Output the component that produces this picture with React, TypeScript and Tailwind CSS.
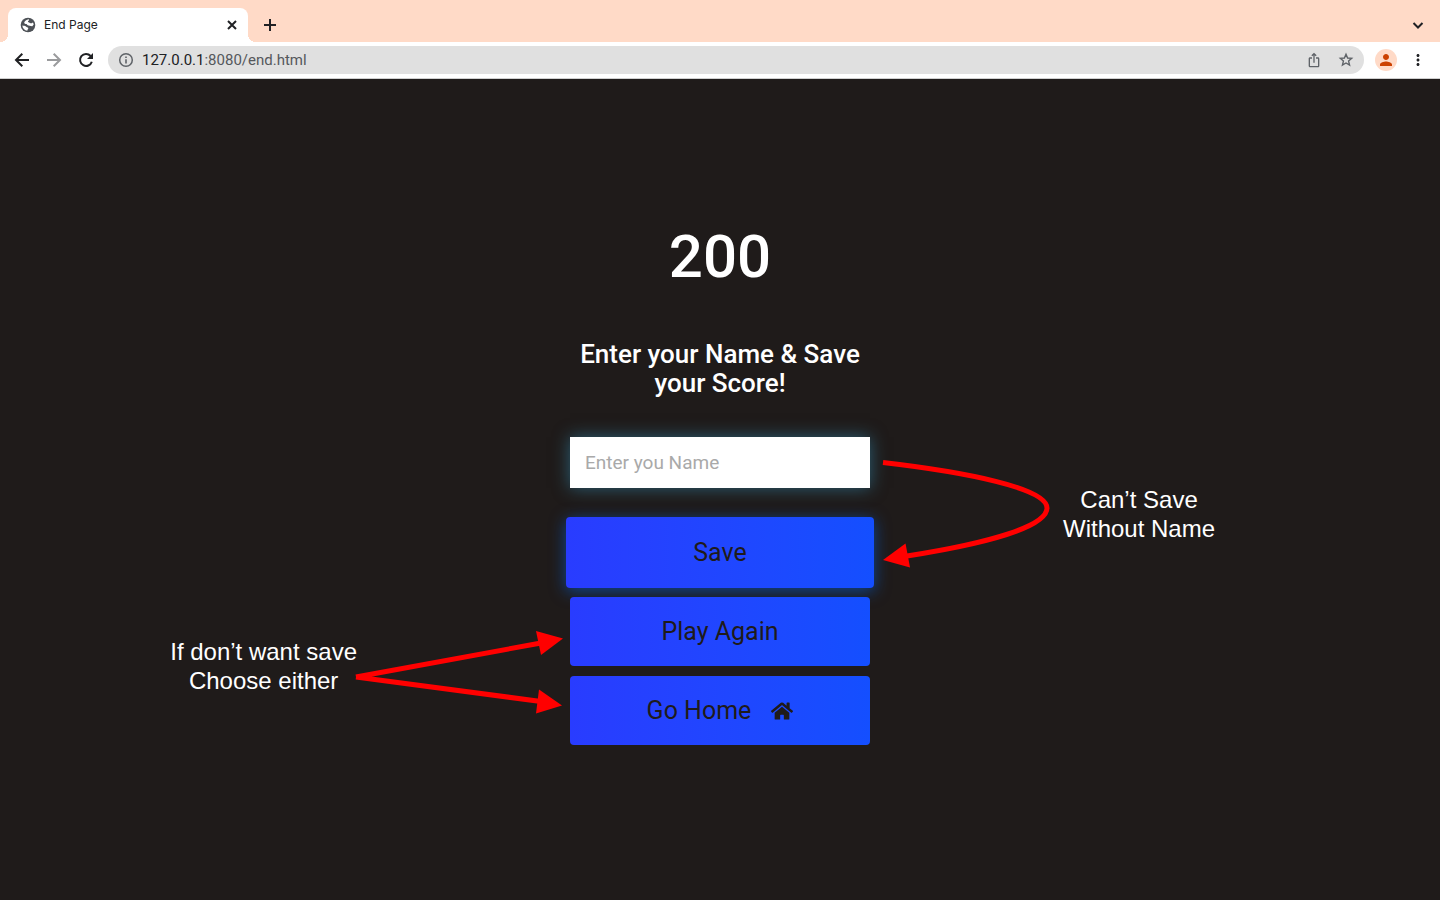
import React from "react";
import { MdIosShare, MdMoreVert, MdPerson } from "react-icons/md";
import { FaHome } from "react-icons/fa";

function GlobeIcon() {
  return (
    <svg viewBox="0 0 16 16" className="size-4" aria-hidden="true">
      <circle cx="8" cy="8" r="7.3" fill="#4d5156" />
      <path
        d="M8.800 2.200C6.400 2.600 4.600 3.800 4.200 5.600C4.300 6.700 5.300 7 6.600 7.100C7.200 8.300 8.200 8.600 9.600 8.700C10.600 8.900 11.200 9.400 12.300 9.300L13.700 7.600C13.600 6.800 13.300 6 12.900 5.400C12 6 11.400 6.200 10.500 6.200C9.800 5.700 9.400 5.400 8.500 5.200C7.700 4.800 7.700 4.200 8.500 3.800C9.100 3.400 9.200 2.800 8.800 2.200Z"
        fill="#fff"
      />
      <path
        d="M2.300 8.400C3.500 8.600 5 8.600 6 9.400C6.600 10.300 7.600 10.200 8.300 10.900C8.500 11.700 7.400 12.200 7.300 13.700C4.600 13.400 2.500 11.300 2.300 8.400Z"
        fill="#fff"
      />
    </svg>
  );
}

/* Stroked glyph on a 20-unit grid, shared by the tab strip and the toolbar. */
function LineIcon({ d, className = "size-5" }: { d: string; className?: string }) {
  return (
    <svg viewBox="0 0 20 20" className={className} fill="none" stroke="currentColor" strokeWidth="2" aria-hidden="true">
      <path d={d} />
    </svg>
  );
}

function TabStrip() {
  return (
    <div className="flex h-[42px] items-end justify-between bg-[#ffdac7] pl-2">
      <div className="flex items-end">
        <div className="relative flex h-[34px] w-60 items-center rounded-t-lg bg-white pr-[6px] pl-3">
          <span className="absolute bottom-0 -left-2 size-2 bg-[radial-gradient(circle_at_0_0,#ffdac7_8px,#fff_8px)]" />
          <span className="absolute -right-2 bottom-0 size-2 bg-[radial-gradient(circle_at_100%_0,#ffdac7_8px,#fff_8px)]" />
          <GlobeIcon />
          <span className="ml-2 flex-1 text-xs text-[#202124]">End Page</span>
          <button type="button" aria-label="Close tab" className="text-[#202124]">
            <LineIcon d="M6 6L14 14M14 6L6 14" />
          </button>
        </div>
        <button type="button" aria-label="New tab" className="ml-3 flex h-[34px] items-center text-[#202124]">
          <LineIcon d="M10 4V16M4 10H16" />
        </button>
      </div>
      <button type="button" aria-label="Search tabs" className="mr-3 flex h-[34px] items-center text-[#202124]">
        <LineIcon d="M5.500 8L10 12.500L14.500 8" />
      </button>
    </div>
  );
}

function Toolbar() {
  return (
    <div className="flex h-[37px] items-center border-b border-[#cfcfcf] bg-white pr-[13px] pl-3 text-[#202124]">
      <div className="flex gap-3">
        <button type="button" aria-label="Back">
          <LineIcon d="M17 10H4.500M10.300 3.700L4 10L10.300 16.300" />
        </button>
        <button type="button" aria-label="Forward" className="text-[#9a9b9d]">
          <LineIcon d="M3 10H15.500M9.700 3.700L16 10L9.700 16.300" />
        </button>
        <button type="button" aria-label="Reload">
          <svg viewBox="0 0 20 20" className="size-5" aria-hidden="true">
            <path
              d="M14.600 6A6 6 0 1 0 15.800 11.700"
              fill="none"
              stroke="currentColor"
              strokeWidth="2"
            />
            <path d="M17 3V9H11Z" fill="currentColor" />
          </svg>
        </button>
      </div>
      <div className="ml-3 flex h-7 flex-1 items-center rounded-full bg-[#e0e0e0] px-[10px] text-[#5f6368]">
        <svg viewBox="0 0 16 16" className="size-4" aria-hidden="true">
          <circle cx="8" cy="8" r="6.300" fill="none" stroke="currentColor" strokeWidth="1.500" />
          <path d="M7.200 7.300H8.800V11.400H7.200ZM7.200 4.600H8.800V6.100H7.200Z" fill="currentColor" />
        </svg>
        <a href="#end" className="ml-2 flex-1 font-[Roboto,sans-serif] text-[15px] text-[#55585c]">
          <span className="text-[#202124]">127.0.0.1</span>:8080/end.html
        </a>
        <button type="button" aria-label="Share">
          <MdIosShare className="size-4" />
        </button>
        <button type="button" aria-label="Bookmark this page" className="ml-4">
          <svg viewBox="0 0 16 16" className="size-4" aria-hidden="true">
            <path
              d="M8 2.200L9.600 6L13.700 6.350L10.600 9.050L11.550 13.100L8 10.950L4.450 13.100L5.400 9.050L2.300 6.350L6.400 6Z"
              fill="none"
              stroke="currentColor"
              strokeWidth="1.400"
            />
          </svg>
        </button>
      </div>
      <button
        type="button"
        aria-label="Profile"
        className="ml-[11px] flex size-[22px] items-center justify-center rounded-full bg-[#ffdac7] text-[#cc4100]"
      >
        <MdPerson className="size-[18px]" />
      </button>
      <button type="button" aria-label="Browser menu" className="ml-3">
        <MdMoreVert className="size-[18px]" />
      </button>
    </div>
  );
}

function SaveNote() {
  return (
    <aside className="absolute top-[219px] left-full flex items-center gap-[3px] text-white">
      <svg viewBox="0 0 190 140" className="h-[140px] w-[190px] shrink-0" aria-hidden="true">
        <path
          d="M13 18.500C95 28 177 44 177 64C177 82 120 99 37 112"
          fill="none"
          stroke="#f00"
          strokeWidth="5"
        />
        <path d="M13 116L35.500 99.500L40 123.500Z" fill="#f00" />
      </svg>
      <p className="text-center font-['Liberation_Sans',sans-serif] text-2xl leading-[29px] whitespace-nowrap">
        Can’t Save
        <br />
        Without Name
      </p>
    </aside>
  );
}

function SkipNote() {
  return (
    <aside className="absolute top-[391px] right-full flex items-center text-white">
      <p className="text-center font-['Liberation_Sans',sans-serif] text-2xl leading-[29px] whitespace-nowrap">
        If don’t want save
        <br />
        Choose either
      </p>
      <svg viewBox="2 -3 213 100" className="h-[100px] w-[213px] shrink-0 overflow-visible" aria-hidden="true">
        <path d="M1 58L186 24M1 58L186 82.500" fill="none" stroke="#f00" strokeWidth="5" />
        <path d="M208 19.500L181 12L186 36Z" fill="#f00" />
        <path d="M207 86.500L184 70.500L181 94.500Z" fill="#f00" />
      </svg>
    </aside>
  );
}

const gradient = "bg-linear-to-r from-[#293cff] to-[#144fff]";

export default function App() {
  return (
    <div className="flex min-h-screen flex-col bg-[#1f1b1a] font-[Inter,sans-serif]">
      <header>
        <TabStrip />
        <Toolbar />
      </header>
      <main className="flex flex-1 flex-col items-center pt-[146px] pb-10 font-[Roboto,sans-serif]">
        <div className="relative flex w-[300px] flex-col">
          <h1 className="text-center text-[60px] leading-[64px] font-medium text-white">200</h1>
          <h2 className="mt-[51px] text-center text-[26px] leading-[29px] font-medium text-white">
            Enter your Name &amp; Save your Score!
          </h2>
          <form className="mt-[39px] flex flex-col" onSubmit={(event) => event.preventDefault()}>
            <input
              type="text"
              aria-label="Name"
              placeholder="Enter you Name"
              className="h-[51px] bg-white px-[15px] text-[19px] text-[#1f1b1a] shadow-[0_0_16px_rgba(56,163,209,0.5)] outline-none placeholder:text-[#a9a9a9]"
            />
            <button
              type="submit"
              className={`-mx-1 mt-[29px] h-[71px] rounded text-[25px] text-[#1f1b1a] shadow-[0_3px_16px_rgba(0,100,230,0.6)] ${gradient}`}
            >
              Save
            </button>
          </form>
          <div className="relative mt-[9px] flex flex-col gap-[10px] text-[25px] text-[#1f1b1a]">
            <button type="button" className={`h-[69px] rounded ${gradient}`}>
              Play Again
            </button>
            <a href="#home" className={`flex h-[69px] items-center justify-center gap-5 rounded ${gradient}`}>
              Go Home
              <FaHome className="size-[22px]" aria-hidden="true" />
            </a>
          </div>
          <SaveNote />
          <SkipNote />
        </div>
      </main>
    </div>
  );
}
